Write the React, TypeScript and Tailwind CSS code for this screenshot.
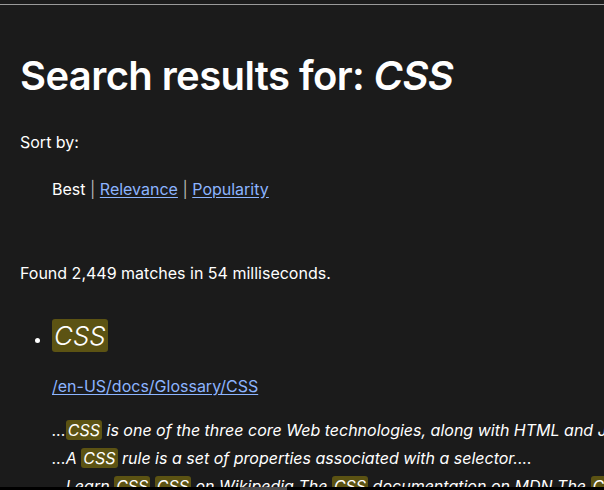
const Mark = ({ children, className = "" }: { children: React.ReactNode; className?: string }) => (
  <mark className={`bg-[#5c5313] text-white rounded-[3px] px-[2px] ${className}`}>{children}</mark>
);

export default function App() {
  return (
    <div className="min-h-[490px] h-[490px] overflow-hidden bg-[#1b1b1b] text-white font-['Inter',sans-serif] relative">
      <div className="h-[4px]" />
      <div className="h-px bg-[#9a9a9a]" />

      <main className="pl-5">
        <h1 className="mt-[47px] text-[40px] leading-[48px] font-semibold tracking-[-0.6px]">
          Search results for: <em className="italic">CSS</em>
        </h1>

        <p className="mt-[30px] text-base leading-6">Sort by:</p>
        <ul className="mt-[23px] pl-8 text-base leading-6">
          <li>
            Best <span className="text-[#b0b0b0]">|</span>{" "}
            <a href="#" className="text-[#8cb4ff] underline underline-offset-2">Relevance</a>{" "}
            <span className="text-[#b0b0b0]">|</span>{" "}
            <a href="#" className="text-[#8cb4ff] underline underline-offset-2">Popularity</a>
          </li>
        </ul>

        <p className="mt-[60px] text-base leading-6">Found 2,449 matches in 54 milliseconds.</p>

        <ul className="mt-[34px] pl-8 list-disc marker:text-white">
          <li>
            <h2 className="text-[26px] leading-[34px] italic font-light">
              <Mark className="px-[2px] py-[1px]">CSS</Mark>
            </h2>
            <a href="#" className="block mt-[21px] text-base leading-6 text-[#8cb4ff] underline underline-offset-2">
              /en-US/docs/Glossary/CSS
            </a>
            <div className="mt-[18px] text-base leading-[28px] italic whitespace-nowrap">
              <p>...<Mark>CSS</Mark> is one of the three core Web technologies, along with HTML and JavaScript....</p>
              <p>...A <Mark>CSS</Mark> rule is a set of properties associated with a selector....</p>
              <p>
                ...Learn <Mark>CSS</Mark> <Mark>CSS</Mark> on Wikipedia The <Mark>CSS</Mark> documentation on MDN The{" "}
                <Mark>CSS</Mark> Working Group...
              </p>
            </div>
          </li>
        </ul>
      </main>

      <div className="absolute left-0 right-0 bottom-0 h-[3px] bg-black">
        <div className="absolute left-[240px] w-[47px] top-0 h-[3px] bg-[#4a4a4a]" />
      </div>
    </div>
  );
}
